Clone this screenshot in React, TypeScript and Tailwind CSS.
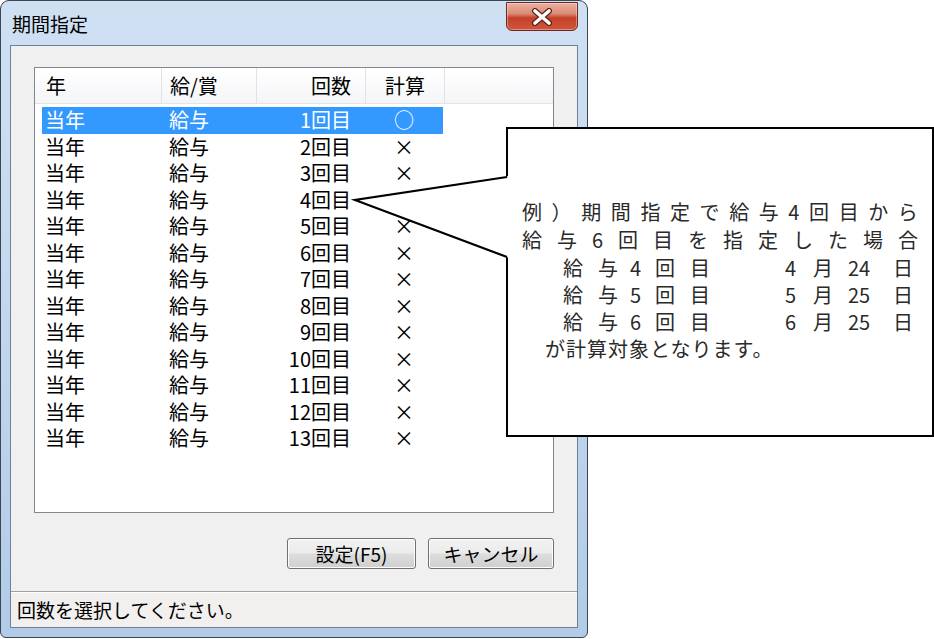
import React from 'react'

// 期間指定ダイアログ + 吹き出しの説明図
const FONT = "font-['Noto_Sans_CJK_JP','Noto_Sans',sans-serif]"

const ROWS = Array.from({ length: 13 }, (_, i) => ({
  id: i + 1,
  selected: i === 0,
}))

const DETAIL = [
  { kai: '4', month: '4', day: '24' },
  { kai: '5', month: '5', day: '25' },
  { kai: '6', month: '6', day: '25' },
]

function CloseButton() {
  return (
    <div className="mt-[1px] mr-[9px] flex h-[29px] w-[72px] items-center justify-center rounded-b-[6px] border border-[#6b2a20] bg-[linear-gradient(180deg,#eab0a0_0%,#dc8a74_40%,#c4402a_55%,#d0563c_100%)] shadow-[inset_0_0_0_1px_rgba(255,255,255,0.35)]">
      <svg width="26" height="18" viewBox="0 0 26 18" aria-hidden="true">
        <path d="M6 3 L20 15 M20 3 L6 15" stroke="#5a2418" strokeWidth="6" strokeLinecap="round" />
        <path d="M6 3 L20 15 M20 3 L6 15" stroke="#ffffff" strokeWidth="3.6" strokeLinecap="round" />
      </svg>
    </div>
  )
}

function ListView() {
  return (
    <div className="h-[446px] w-[520px] border border-[#828790] bg-white">
      <div className="flex h-[36px] border-b border-[#e2e4e7] bg-linear-to-b from-white to-[#f4f5f7] text-[20px] leading-none text-black">
        <div className="flex w-[127px] items-center border-r border-[#e0e2e5] pl-[11px]">年</div>
        <div className="flex w-[95px] items-center border-r border-[#e0e2e5] pl-[8px]">給/賞</div>
        <div className="flex w-[109px] items-center justify-end border-r border-[#e0e2e5] pr-[14px]">回数</div>
        <div className="flex w-[79px] items-center justify-center border-r border-[#e0e2e5]">計算</div>
        <div className="flex-1" />
      </div>
      <div className="pt-[3px] pl-[7px]">
        {ROWS.map((r) => (
          <div
            key={r.id}
            className={`flex h-[26.5px] w-[401px] items-center text-[20px] leading-none ${
              r.selected ? 'bg-[#3399ff] text-white' : 'text-black'
            }`}
          >
            <div className="w-[117px] pl-[3px]">当年</div>
            <div className="w-[96px] pl-[10px]">給与</div>
            <div className="w-[110px] pr-[14px] text-right">{r.id}回目</div>
            <div className="w-[78px] text-center">{r.selected ? '○' : '×'}</div>
          </div>
        ))}
      </div>
    </div>
  )
}

function Button({ label, width }: { label: string; width: string }) {
  return (
    <div
      className={`flex h-[31px] ${width} items-center justify-center rounded-[3px] border border-[#707070] bg-[linear-gradient(180deg,#f2f2f2_0%,#ebebeb_48%,#dddddd_52%,#cfcfcf_100%)] text-[19px] leading-none text-black shadow-[inset_0_0_0_1px_#fcfcfc]`}
    >
      {label}
    </div>
  )
}

function Dialog() {
  return (
    <div className="flex h-[638px] w-[588px] flex-col rounded-t-[9px] rounded-b-[6px] border border-[#3c4650] bg-[#b9d1ea] bg-linear-to-b from-[#cfe0f3] via-[#c2d7ee] to-[#b1cbe8]">
      <div className="flex h-[44px] items-start justify-between">
        <div className="flex h-[44px] items-center pl-[11px] text-[19px] leading-none text-black">期間指定</div>
        <CloseButton />
      </div>
      <div className="mx-[9px] mb-[9px] flex flex-1 flex-col border border-[#6f8196] bg-[#f0f0f0]">
        <div className="flex flex-1 flex-col px-[23px] pt-[21px]">
          <ListView />
          <div className="mt-[25px] flex justify-end gap-[12px]">
            <Button label="設定(F5)" width="w-[129px]" />
            <Button label="キャンセル" width="w-[126px]" />
          </div>
        </div>
        <div className="flex h-[36px] items-center border-t border-[#a0a0a0] bg-[#f2efef] pl-[6px] text-[19px] leading-none text-black shadow-[inset_0_1px_0_#ffffff]">
          回数を選択してください。
        </div>
      </div>
    </div>
  )
}

function Callout() {
  const line1 = ['例', '）', '期', '間', '指', '定', 'で', '給', '与', '4', '回', '目', 'か', 'ら']
  const line2 = ['給', '与', '6', '回', '目', 'を', '指', '定', 'し', 'た', '場', '合']
  return (
    <>
      <div className="absolute top-[127px] left-[506px] h-[310px] w-[428px] border-2 border-black bg-white pt-[69px] text-[20px] leading-[28px] text-[#2a2a2a]">
        <div className="mx-[14px] flex justify-between">
          {line1.map((c, i) => (
            <span key={i}>{c}</span>
          ))}
        </div>
        <div className="mx-[14px] flex justify-between">
          {line2.map((c, i) => (
            <span key={i}>{c}</span>
          ))}
        </div>
        {DETAIL.map((d) => (
          <div
            key={d.kai}
            className="ml-[55px] grid grid-cols-[35px_32px_25px_35px_95px_28px_35px_45px_auto] leading-[27px]"
          >
            <span>給</span>
            <span>与</span>
            <span>{d.kai}</span>
            <span>回</span>
            <span>目</span>
            <span>{d.month}</span>
            <span>月</span>
            <span>{d.day}</span>
            <span>日</span>
          </div>
        ))}
        <div className="ml-[37px] tracking-[1px]">が計算対象となります。</div>
      </div>
      <svg
        className="absolute top-[170px] left-[350px]"
        width="160"
        height="95"
        viewBox="0 0 160 95"
        aria-hidden="true"
      >
        <polygon points="5,30 159,6 159,88" fill="#ffffff" />
        <polyline points="157,7 5,30 157,87" fill="none" stroke="#000000" strokeWidth="2.2" strokeLinejoin="miter" />
      </svg>
    </>
  )
}

export default function App() {
  return (
    <div className={`relative h-[639px] w-[934px] overflow-hidden bg-white ${FONT}`}>
      <Dialog />
      <Callout />
    </div>
  )
}
